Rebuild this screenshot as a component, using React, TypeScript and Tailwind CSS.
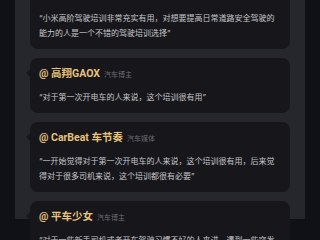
const REVIEWS = [
  {
    name: '小米汽车用户',
    tag: '车主',
    text: '“小米高阶驾驶培训非常充实有用，对想要提高日常道路安全驾驶的能力的人是一个不错的驾驶培训选择”',
  },
  {
    name: '高翔GAOX',
    tag: '汽车博主',
    text: '“对于第一次开电车的人来说，这个培训很有用”',
  },
  {
    name: 'CarBeat 车节奏',
    tag: '汽车媒体',
    text: '“一开始觉得对于第一次开电车的人来说，这个培训很有用，后来觉得对于很多司机来说，这个培训都很有必要”',
  },
  {
    name: '平车少女',
    tag: '汽车博主',
    text: '“对于一些新手司机或者开车驾驶习惯不好的人来讲，遇到一些突发情况时往往会手忙脚乱，这个培训很有帮助”',
  },
];

export default function App() {
  return (
    <div
      className="w-[320px] h-[240px] overflow-hidden bg-[#0f1117] px-[15px]"
      style={{ fontFamily: 'Inter, "Noto Sans CJK SC", sans-serif' }}
    >
      <div className="h-full bg-[#26262d] px-[15px]">
        {/* 评价列表（已滚动） */}
        <div className="flex flex-col gap-[9px] -mt-[21px]">
          {REVIEWS.map((r) => (
            <div key={r.name} className="relative rounded-[8px] bg-[#16161b] px-[9px] pt-[9px] pb-[8px]">
              <span className="absolute -left-[4px] top-[11px] w-0 h-0 border-y-[4px] border-y-transparent border-r-[4px] border-r-[#16161b]" />
              <div className="flex items-baseline gap-[4px] h-[13px] leading-[13px]">
                <span
                  className="text-[10.5px] font-bold text-[#e7c27c]"
                  style={{ fontFamily: 'Roboto, "Noto Sans CJK SC", sans-serif' }}
                >
                  @ {r.name}
                </span>
                <span className="text-[7px] text-[#6c6c72]">{r.tag}</span>
              </div>
              <p className="mt-[10px] text-[8px] leading-[15px] text-[#c6c6ca]">{r.text}</p>
            </div>
          ))}
        </div>
      </div>
    </div>
  );
}
